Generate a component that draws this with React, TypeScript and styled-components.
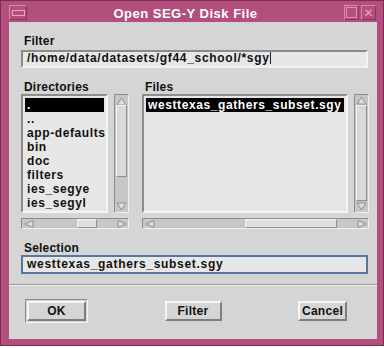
import styled, { createGlobalStyle } from 'styled-components'

const GlobalStyle = createGlobalStyle`
  html, body {
    margin: 0;
    padding: 0;
    background: #ffffff;
  }
  body {
    font-family: "Liberation Sans", Arial, sans-serif;
  }
`

const directories = ['.', '..', 'app-defaults', 'bin', 'doc', 'filters', 'ies_segye', 'ies_segyl']
const files = ['westtexas_gathers_subset.sgy']

const UpArrow = () => (
    <svg width="11" height="9" viewBox="0 0 11 9">
        <polygon points="5.5,1 10,8 1,8" fill="#dcdcdc" stroke="#8e8e8e" strokeWidth="1" />
    </svg>
)

const DownArrow = () => (
    <svg width="11" height="9" viewBox="0 0 11 9">
        <polygon points="1,1 10,1 5.5,8" fill="#dcdcdc" stroke="#8e8e8e" strokeWidth="1" />
    </svg>
)

const LeftArrow = () => (
    <svg width="10" height="8" viewBox="0 0 10 8">
        <polygon points="1,4 9,0.5 9,7.5" fill="#dcdcdc" stroke="#8e8e8e" strokeWidth="1" />
    </svg>
)

const RightArrow = () => (
    <svg width="10" height="8" viewBox="0 0 10 8">
        <polygon points="9,4 1,0.5 1,7.5" fill="#dcdcdc" stroke="#8e8e8e" strokeWidth="1" />
    </svg>
)

const VScroll = ({ top, size }: { top: number, size: number }) => (
    <VScrollBar>
        <VArrow><UpArrow /></VArrow>
        <VTrack>
            <VThumb style={{ marginTop: top, height: size }} />
        </VTrack>
        <VArrow><DownArrow /></VArrow>
    </VScrollBar>
)

const HScroll = ({ left, size }: { left: number, size: number }) => (
    <HScrollBar>
        <HArrow><LeftArrow /></HArrow>
        <HTrack>
            <HThumb style={{ marginLeft: left, width: size }} />
        </HTrack>
        <HArrow><RightArrow /></HArrow>
    </HScrollBar>
)

const App = () => {
    return (
        <>
            <GlobalStyle />
            <Frame>
                <TitleBar>
                    <TitleButton width={18}>
                        <MinusGlyph />
                    </TitleButton>
                    <Title>Open SEG-Y Disk File</Title>
                    <TitleButton width={15}>
                        <MaxGlyph />
                    </TitleButton>
                    <TitleButton width={15}>
                        <CloseGlyph>✕</CloseGlyph>
                    </TitleButton>
                </TitleBar>
                <Content>
                    <Label top={12}>Filter</Label>
                    <Field>/home/data/datasets/gf44_school/*sgy<Caret /></Field>

                    <ListsRow>
                        <Column>
                            <Label top={0}>Directories</Label>
                            <ListWithBar>
                                <ListBox width={87}>
                                    {directories.map((d, i) => (
                                        <ListItem key={d} selected={i === 0}>{d}</ListItem>
                                    ))}
                                </ListBox>
                                <VScroll top={-3} size={72} />
                            </ListWithBar>
                            <HScroll left={41} size={20} />
                        </Column>
                        <Column>
                            <Label top={0}>Files</Label>
                            <ListWithBar>
                                <ListBox width={206}>
                                    {files.map((f, i) => (
                                        <ListItem key={f} selected={i === 0}>{f}</ListItem>
                                    ))}
                                </ListBox>
                                <VScroll top={-2} size={96} />
                            </ListWithBar>
                            <HScroll left={88} size={92} />
                        </Column>
                    </ListsRow>

                    <Label top={12}>Selection</Label>
                    <Field focused>westtexas_gathers_subset.sgy</Field>

                    <Separator />

                    <ButtonRow>
                        <DefaultRing>
                            <PushButton width={59}>OK</PushButton>
                        </DefaultRing>
                        <PushButton width={57}>Filter</PushButton>
                        <PushButton width={49}>Cancel</PushButton>
                    </ButtonRow>
                </Content>
            </Frame>
        </>
    )
}

const Frame = styled.div`
    width: 384px;
    height: 346px;
    box-sizing: border-box;
    background: #b24f7d;
    border: 1px solid #7c2b53;
    padding: 0 6px 6px 8px;
    display: flex;
    flex-direction: column;
`

const TitleBar = styled.div`
    height: 21px;
    display: flex;
    align-items: center;
    gap: 2px;
    padding-right: 1px;
`

const TitleButton = styled.div<{ width: number }>`
    width: ${(props) => props.width}px;
    height: 15px;
    box-sizing: border-box;
    border: 1px solid #d68aac;
    border-right-color: #8a3560;
    border-bottom-color: #8a3560;
    display: flex;
    align-items: center;
    justify-content: center;
    margin-top: 2px;
`

const MinusGlyph = styled.div`
    width: 11px;
    height: 4px;
    border: 1px solid #e6a8c4;
`

const MaxGlyph = styled.div`
    width: 9px;
    height: 9px;
    border: 1px solid #d993b3;
`

const CloseGlyph = styled.span`
    font-family: "DejaVu Sans", sans-serif;
    font-size: 12px;
    line-height: 12px;
    color: #e4a4c1;
`

const Title = styled.div`
    flex: 1;
    text-align: center;
    color: #ffffff;
    font-weight: bold;
    font-size: 13px;
    letter-spacing: 0.5px;
    margin-top: 3px;
`

const Content = styled.div`
    flex: 1;
    background: #d5d5d5;
    padding-left: 12px;
    display: flex;
    flex-direction: column;
    align-items: flex-start;
`

const Label = styled.div<{ top: number }>`
    margin-top: ${(props) => props.top}px;
    padding-left: 3px;
    font-size: 12px;
    font-weight: bold;
    line-height: 14px;
    letter-spacing: 0.2px;
    color: #111111;
`

const Field = styled.div<{ focused?: boolean }>`
    width: 347px;
    height: ${(props) => props.focused ? 19 : 18}px;
    box-sizing: border-box;
    background: #e7e7e7;
    border: 2px solid;
    border-color: ${(props) => props.focused
        ? '#56789c'
        : '#8a8a8a #f2f2f2 #f2f2f2 #8a8a8a'};
    padding: ${(props) => props.focused ? 1 : 0}px 4px 0;
    margin-top: ${(props) => props.focused ? 0 : 2}px;
    font-size: 12px;
    font-weight: bold;
    line-height: 12px;
    letter-spacing: 0.7px;
    color: #111111;
    white-space: nowrap;
`

const Caret = styled.span`
    display: inline-block;
    width: 1px;
    height: 12px;
    background: #222222;
    vertical-align: top;
`

const ListsRow = styled.div`
    display: flex;
    margin-top: 12px;
    gap: 13px;
`

const Column = styled.div`
    display: flex;
    flex-direction: column;
`

const ListWithBar = styled.div`
    display: flex;
    gap: 6px;
    height: 119px;
`

const ListBox = styled.div<{ width: number }>`
    width: ${(props) => props.width}px;
    box-sizing: border-box;
    background: #e7e7e7;
    border: 2px solid;
    border-color: #8c8c8c #f4f4f4 #f4f4f4 #8c8c8c;
    padding: 2px;
    overflow: hidden;
`

const ListItem = styled.div<{ selected?: boolean }>`
    height: 14px;
    line-height: 14px;
    padding-left: 2px;
    font-size: 12px;
    font-weight: bold;
    letter-spacing: 0.6px;
    white-space: nowrap;
    background: ${(props) => props.selected ? '#000000' : 'transparent'};
    color: ${(props) => props.selected ? '#ffffff' : '#111111'};
`

const VScrollBar = styled.div`
    width: 15px;
    box-sizing: border-box;
    background: #c6c6c6;
    border: 1px solid;
    border-color: #8c8c8c #f0f0f0 #f0f0f0 #8c8c8c;
    display: flex;
    flex-direction: column;
`

const VArrow = styled.div`
    height: 12px;
    display: flex;
    align-items: center;
    justify-content: center;
`

const VTrack = styled.div`
    flex: 1;
    padding: 1px 1px;
`

const VThumb = styled.div`
    box-sizing: border-box;
    background: #d9d9d9;
    border: 1px solid;
    border-color: #f2f2f2 #8e8e8e #8e8e8e #f2f2f2;
`

const HScrollBar = styled.div`
    margin-top: 5px;
    height: 11px;
    box-sizing: border-box;
    background: #c6c6c6;
    border: 1px solid;
    border-color: #8c8c8c #f0f0f0 #f0f0f0 #8c8c8c;
    display: flex;
`

const HArrow = styled.div`
    width: 13px;
    display: flex;
    align-items: center;
    justify-content: center;
`

const HTrack = styled.div`
    flex: 1;
    display: flex;
    padding: 0 1px;
`

const HThumb = styled.div`
    box-sizing: border-box;
    background: #e0e0e0;
    border: 1px solid;
    border-color: #f4f4f4 #8e8e8e #8e8e8e #f4f4f4;
`

const Separator = styled.div`
    margin-top: 10px;
    margin-left: -12px;
    align-self: stretch;
    height: 0;
    border-top: 1px solid #9a9a9a;
    border-bottom: 1px solid #f2f2f2;
`

const ButtonRow = styled.div`
    align-self: stretch;
    display: flex;
    align-items: center;
    justify-content: space-between;
    margin-top: 13px;
    padding: 0 30px 0 4px;
`

const DefaultRing = styled.div`
    padding: 1px;
    border: 1px solid;
    border-color: #8c8c8c #f4f4f4 #f4f4f4 #8c8c8c;
    display: flex;
`

const PushButton = styled.button<{ width: number }>`
    width: ${(props) => props.width}px;
    height: 20px;
    box-sizing: border-box;
    background: #d5d5d5;
    border: 2px solid;
    border-color: #f6f6f6 #7e7e7e #7e7e7e #f6f6f6;
    padding: 0;
    font-family: "Liberation Sans", Arial, sans-serif;
    font-size: 12px;
    font-weight: bold;
    letter-spacing: 0.3px;
    color: #111111;
    cursor: pointer;
`

export default App
